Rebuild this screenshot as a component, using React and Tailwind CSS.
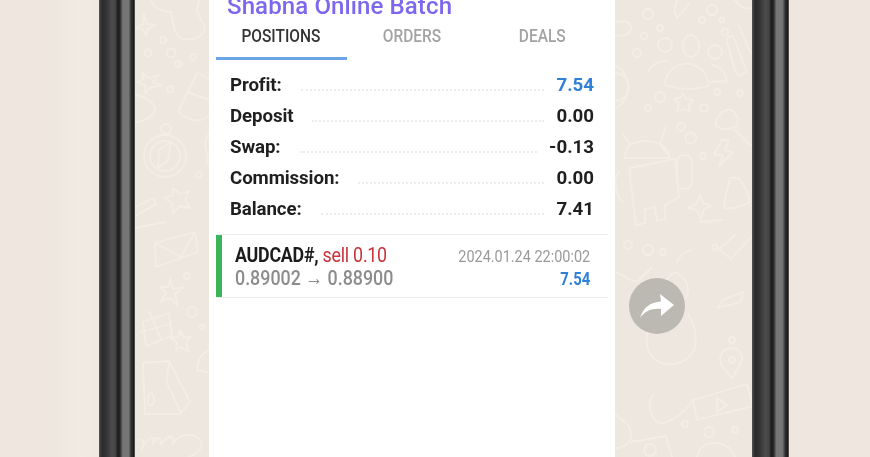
const Frame = ({ wide }) => (
  <div className={`h-full shrink-0 bg-[linear-gradient(90deg,#555_0,#2a2a2a_8%,#333_20%,#4c4c4c_36%,#444_46%,#1d1d1d_52%,#262626_58%,#757575_66%,#767676_82%,#2e2e2e_90%,#1c1c1c_96%,#666_100%)] ${wide ? "w-[37px]" : "w-[36px]"}`} />
);

const Row = ({ label, value, blue }) => (
  <div className="flex h-[31px] items-center">
    <span className="text-[18.7px] font-bold tracking-[-0.1px] text-[#1f1f1f]">{label}</span>
    <span className="ml-[19px] mr-[12px] mt-[8px] flex-1 border-b-2 border-dotted border-[#ececec]" />
    <span className={`text-[18.7px] font-bold ${blue ? "text-[#2f80d8]" : "text-[#1f1f1f]"}`}>{value}</span>
  </div>
);

const Tab = ({ children, active }) => (
  <div className={`h-[38px] pt-[3px] text-center text-[18px] leading-[22px] font-medium ${active ? "border-b-[3px] border-[#6aa5e6] text-[#333333]" : "text-[#a3a3a3]"}`}>
    <span className="inline-block scale-x-[.86]">{children}</span>
  </div>
);

const LeftDoodles = () => (
  <svg className="h-full w-full" viewBox="0 0 74 457" fill="none" stroke="#f3ede6" strokeWidth="1.8" strokeLinejoin="round" strokeLinecap="round">
    <path d="M9 14l3 10 9 1-8 4-2 7-3-7-7-1 7-4z" />
    <path d="M16 0c2 8 12 12 20 12 2 8 2 22 10 26 8 3 18 2 24-8-1-8-7-14-8-20l2-10" />
    <circle cx="28" cy="40" r="3" /><circle cx="13" cy="53" r="3.5" /><circle cx="36" cy="53" r="4.5" /><circle cx="43" cy="64" r="3" /><circle cx="58" cy="57" r="3" />
    <path d="M6 72l8 6 10-3-6 7 9 4-11 1-6 6 0-8-8-3 7-3z" />
    <circle cx="35" cy="89" r="3" />
    <path d="M62 73l-18 37c0 5 12 12 22 10l8-4M62 73l12 6M52 92l22 8" />
    <path d="M0 95c10 1 20 8 20 14s-10 13-20 13" />
    <circle cx="30" cy="156" r="21" /><circle cx="30" cy="156" r="15" /><path d="M24 150l12-8-3 18-10 8z" /><circle cx="31" cy="129" r="5" />
    <path d="M74 134c-6 6-4 14-2 20s-4 10 2 8" /><circle cx="64" cy="175" r="3" />
    <path d="M38 188l7 6 9-3-4 9 5 8-10-2-7 7-1-10-8-5 9-3z" />
    <path d="M0 207l19-9 2 6-21 12M0 228l30-6" />
    <path d="M20 243l40-11 3 20-42 15zM20 243l26 14 14-25" />
    <path d="M35 278l3 11 11-2-9 7 3 12-8-8-10 4 6-9-6-6 9 0z" /><circle cx="52" cy="276" r="3" />
    <circle cx="57" cy="312" r="5" /><circle cx="67" cy="327" r="2.500" />
    <path d="M8 322l26-9 3 23-26 10zM14 311l12 28M5 332l30-8" />
    <path d="M45 330l4 8 7-2-5 7 3 9-8-5-5 3 1-7-6-5 8-1z" />
    <path d="M8 363l26-2 21 41-10 12-35 0zM34 361l-2 22 14 30" />
    <path d="M16 392c-4 5-5 11 0 14 5-3 4-9 0-14z" /><path d="M74 350c-8 4-12 10-12 20l10 2" />
    <path d="M4 440c6-2 6 4 2 10 8-14 14-16 12-6 4-8 8-8 8 0 8-10 14-10 12 0 6-12 24-12 28-2s-16 18-30 20" />
  </svg>
);

const RightDoodles = () => (
  <svg className="h-full w-full" viewBox="0 0 137 457" fill="none" stroke="#f3ede6" strokeWidth="1.8" strokeLinejoin="round" strokeLinecap="round">
    <path d="M0 65a25 25 0 0 1 0 44" /><path d="M0 73a14 14 0 0 1 0 28" />
    <circle cx="50" cy="45" r="7" /><ellipse cx="76" cy="46" rx="8" ry="11" /><circle cx="100" cy="52" r="7" />
    <path d="M49 84c4-16 16-22 26-20 10 2 18 10 19 22-14 4-32 4-45-2z" />
    <path d="M33 72c4-8 12-12 20-11M97 65c8 1 14 8 15 16l-16 1" />
    <path d="M68 94l4 5 6 1-4 5 1 7-6-3-7 2 2-7-5-5 6-1z" />
    <circle cx="45" cy="97" r="5" /><circle cx="33" cy="108" r="3" /><circle cx="89" cy="108" r="4" /><circle cx="66" cy="127" r="4" /><circle cx="76" cy="138" r="5.500" /><circle cx="88" cy="156" r="3" /><circle cx="102" cy="92" r="3" />
    <path d="M8 134l7 11c8-5 22-5 30-1l6-18M10 158c0-6 2-10 5-13M45 144c6 3 9 8 10 14z" /><path d="M10 158h45" />
    <path d="M15 168l45-9 4 38-14 8v14l-8 2-2-14-10 2v14l-9 2-2-16-4-32z" />
    <rect x="62" y="155" width="15" height="34" rx="7" />
    <path d="M4 172c-6 6-4 24 4 30" />
    <path d="M107 140l-8 14 9 2-4 10 14-14-8-2 4-10z" />
    <path d="M100 125c2-10 10-17 16-15 6 3 8 10 6 16-8 4-16 4-22-1zM120 130l16 16" />
    <path d="M115 178c-2 10-6 20-6 30 8 2 18-2 26-6-2-10-6-18-12-24z" />
    <path d="M85 195l3 8 9 3-8 3-3 10-4-9-9-2 8-4z" />
    <path d="M120 70l-8-28c-1-4 2-6 6-6l14 36-8 4zM124 26l12 28" />
    <path d="M62 0c-2 6-4 12 0 18l12-14" /><path d="M120 0c4 6 10 10 17 8" />
    <circle cx="33" cy="14" r="5" /><circle cx="97" cy="10" r="5" /><circle cx="87" cy="20" r="3" /><circle cx="107" cy="20" r="2.500" /><circle cx="110" cy="32" r="3.500" /><circle cx="29" cy="36" r="3.500" /><circle cx="45" cy="28" r="3" /><circle cx="22" cy="53" r="4" />
    <path d="M0 22c10-2 16 0 16 6s-8 8-16 8" /><circle cx="125" cy="93" r="3" />
    <path d="M120 235l-16 14 12 10 20-22M85 222l22-2" />
    <circle cx="13" cy="245" r="4" /><circle cx="33" cy="250" r="5" /><circle cx="48" cy="252" r="3" /><circle cx="100" cy="247" r="2.500" />
    <path d="M60 272c8 4 14 10 13 20s-14 14-22 10-4-22 9-30z" />
    <path d="M62 262c2-6 8-10 14-12M108 300l20-8-2 10-24 6z" />
    <path d="M0 272c12 4 18 12 24 8l12-12" />
    <path d="M38 320c-10 15-8 32 3 40s26 4 34-4 8-26-2-42" />
    <path d="M105 360c0-8 6-12 12-12s11 6 10 12c-2 6-6 12-10 18-6-6-11-12-12-18z" /><circle cx="117" cy="360" r="3" />
    <circle cx="117" cy="340" r="3" />
    <path d="M78 400l54-16 6 22-56 14z" /><path d="M102 398v14l10-7z" />
    <path d="M38 395c-8 10 0 30 10 28s26-14 30-24" />
    <circle cx="70" cy="424" r="3" /><circle cx="94" cy="432" r="5" /><circle cx="120" cy="430" r="3" />
    <path d="M15 442l36-6 6 21M82 457c2-10 8-14 18-14s18 6 20 14" /><circle cx="35" cy="450" r="6" />
    <path d="M0 414c8 8 16 10 16 20s-8 14-16 14" />
  </svg>
);

export default function App() {
  return (
    <div className="flex h-[457px] w-[870px] overflow-hidden bg-[#efe7df] font-['Roboto',sans-serif] blur-[0.4px]">
      <div className="h-full w-[99px] shrink-0 bg-[linear-gradient(90deg,#efe7df_0,#efe7df_55%,#f1ebe4_80%,#f0e9e2_100%)]" />
      <Frame />
      <div className="h-full w-[74px] shrink-0 bg-[#eee7df]"><LeftDoodles /></div>
      <main className="h-full w-[406px] shrink-0 bg-white px-[7px]">
        <h1 className="-mt-[7px] ml-[11px] h-[24px] text-[24px] leading-[27px] font-medium tracking-[0.12px] whitespace-nowrap text-[#7b68ee]">Shabna Online Batch</h1>
        <div className="mt-[5px] grid grid-cols-3">
          <Tab active>POSITIONS</Tab>
          <Tab>ORDERS</Tab>
          <Tab>DEALS</Tab>
        </div>
        <section className="mt-[10px] px-[14px]">
          <Row label="Profit:" value="7.54" blue />
          <Row label="Deposit" value="0.00" />
          <Row label="Swap:" value="-0.13" />
          <Row label="Commission:" value="0.00" />
          <Row label="Balance:" value="7.41" />
        </section>
        <div className="mt-[9px] flex h-[64px] border-y border-[#ececec]">
          <div className="w-[6px] shrink-0 bg-[#3cb55a]" />
          <div className="min-w-0 flex-1 pt-[8px] pl-[13px]">
            <div className="flex h-[24px] items-baseline justify-between pr-[18px]">
              <span className="inline-block origin-left scale-x-[.85] text-[21px] leading-[24px] font-bold tracking-[-0.3px] whitespace-nowrap text-[#1c1c1c]">AUDCAD#, <span className="font-normal text-[#c8323a]">sell 0.10</span></span>
              <span className="inline-block origin-right scale-x-[.85] text-[17px] leading-[24px] whitespace-nowrap text-[#9a9a9a]">2024.01.24 22:00:02</span>
            </div>
            <div className="flex h-[22px] items-baseline justify-between pr-[18px]">
              <span className="inline-block origin-left scale-x-[.85] text-[21px] leading-[22px] font-medium whitespace-nowrap text-[#8c8c8c]">0.89002 → 0.88900</span>
              <span className="inline-block origin-right scale-x-[.85] text-[17.5px] leading-[22px] font-bold text-[#2f80d8]">7.54</span>
            </div>
          </div>
        </div>
      </main>
      <div className="relative h-full w-[137px] shrink-0 bg-[#eee7df]">
        <RightDoodles />
        <div className="absolute top-[278px] left-[14px] flex h-[56px] w-[56px] items-center justify-center rounded-full bg-[#bcb9b3]">
          <svg width="34" height="24" viewBox="0 0 34 24" fill="#fff"><path d="M0 24C3 14 10 8 21 7.500L20 0l14 11-13 11 0-7C12 14 5 17 0 24z" /></svg>
        </div>
      </div>
      <Frame wide />
      <div className="h-full flex-1 bg-[#efe7df]" />
    </div>
  );
}
